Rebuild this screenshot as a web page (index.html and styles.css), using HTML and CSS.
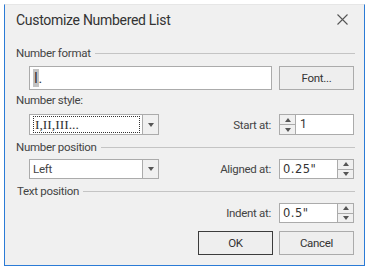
FILE: index.html
```html
<!DOCTYPE html>
<html lang="en">
<head>
    <meta charset="UTF-8">
    <title>Customize Numbered List</title>
    <link rel="stylesheet" href="styles.css">
</head>
<body>
    <div class="dialog">
        <div class="titlebar">
            <span class="title">Customize Numbered List</span>
            <svg class="close" width="11" height="11" viewBox="0 0 11 11">
                <path d="M0.5 0.5 L10.5 10.5 M10.5 0.5 L0.5 10.5" stroke="#555" stroke-width="1.1" fill="none"/>
            </svg>
        </div>

        <div class="group">
            <span>Number format</span>
            <div class="line"></div>
        </div>
        <div class="row row-format">
            <div class="textbox format"><span class="sel">I</span>.</div>
            <button class="btn">Font...</button>
        </div>

        <div class="label">Number style:</div>
        <div class="row row-style">
            <div class="combo">
                <div class="combo-text"><span class="focus">I,II,III...</span></div>
                <div class="combo-arrow"><i class="tri down"></i></div>
            </div>
            <span class="field-label">Start at:</span>
            <div class="spin spin-left">
                <div class="spin-btns">
                    <div class="spin-btn"><i class="tri up"></i></div>
                    <div class="spin-btn"><i class="tri down"></i></div>
                </div>
                <div class="spin-text">1</div>
            </div>
        </div>

        <div class="group">
            <span>Number position</span>
            <div class="line"></div>
        </div>
        <div class="row">
            <div class="combo">
                <div class="combo-text">Left</div>
                <div class="combo-arrow"><i class="tri down"></i></div>
            </div>
            <span class="field-label">Aligned at:</span>
            <div class="spin">
                <div class="spin-text">0.25"</div>
                <div class="spin-btns">
                    <div class="spin-btn"><i class="tri up"></i></div>
                    <div class="spin-btn"><i class="tri down"></i></div>
                </div>
            </div>
        </div>

        <div class="group group-text">
            <span>Text position</span>
            <div class="line"></div>
        </div>
        <div class="row">
            <span class="field-label">Indent at:</span>
            <div class="spin">
                <div class="spin-text">0.5"</div>
                <div class="spin-btns">
                    <div class="spin-btn"><i class="tri up"></i></div>
                    <div class="spin-btn"><i class="tri down"></i></div>
                </div>
            </div>
        </div>

        <div class="buttons">
            <button class="btn btn-default">OK</button>
            <button class="btn">Cancel</button>
        </div>
    </div>
</body>
</html>
```

FILE: styles.css
```css
* {
    margin: 0;
    padding: 0;
    box-sizing: border-box;
}

body {
    background: #ffffff;
    font-family: Roboto, 'Open Sans', sans-serif;
    font-size: 11.5px;
    letter-spacing: -0.3px;
    color: #444;
}

.dialog {
    margin: 4px 0 0 4px;
    width: 361px;
    height: 262px;
    background: #f0f0f0;
    border: 1px solid #2b7bd6;
    border-top-color: #e6e6e6;
}

.titlebar {
    height: 38px;
    display: flex;
    align-items: flex-start;
    justify-content: space-between;
    padding: 5px 16px 0 11px;
}

.title {
    font-size: 14px;
    line-height: 20px;
    color: #333;
}

.close {
    margin-top: 4px;
}

.group {
    display: flex;
    align-items: center;
    height: 20px;
    padding: 0 9px 0 11px;
}

.group span {
    white-space: nowrap;
    margin-right: 4px;
}

.group-text {
    margin-top: 2px;
    padding-left: 12px;
}

.line {
    flex: 1;
    height: 1px;
    background: #c4c4c4;
}

.label {
    height: 20px;
    line-height: 20px;
    padding-left: 11px;
}

.row {
    display: flex;
    align-items: center;
    height: 20px;
    margin: 2px 0;
    padding: 0 10px 0 24px;
}

.row-format {
    height: 24px;
    margin: 3px 0 0;
}

.row-style {
    height: 21px;
    margin-top: 4px;
}

.textbox {
    background: #fff;
    border: 1px solid #ababab;
    height: 100%;
}

.format {
    width: 243px;
    padding: 2px 0 2px 3px;
    display: flex;
    align-items: stretch;
    font-size: 14px;
    line-height: 18px;
    color: #333;
}

.sel {
    background: #c3c3c3;
    padding: 0 1px;
}

.btn {
    width: 75px;
    height: 23px;
    margin-left: auto;
    background: #eeeeee;
    border: 1px solid #ababab;
    font-family: inherit;
    font-size: 11.5px;
    letter-spacing: -0.3px;
    color: #333;
}

.row-format .btn {
    height: 24px;
}

.combo {
    display: flex;
    width: 130px;
    height: 100%;
    border: 1px solid #ababab;
    background: #fff;
}

.combo-text {
    flex: 1;
    padding: 1px 2px 1px 3px;
    line-height: 17px;
    display: flex;
}

.focus {
    flex: 1;
    border: 1px dotted #333;
    padding-left: 1px;
    line-height: 15px;
    font-family: 'Liberation Serif', serif;
    font-size: 13.5px;
    letter-spacing: 0;
    color: #333;
}

.combo-arrow {
    width: 16px;
    border-left: 1px solid #ababab;
    background: #f0f0f0;
    display: flex;
    align-items: center;
    justify-content: center;
}

.tri {
    width: 0;
    height: 0;
    border-left: 3px solid transparent;
    border-right: 3px solid transparent;
}

.tri.down {
    border-top: 4px solid #555;
}

.tri.up {
    border-bottom: 4px solid #555;
}

.field-label {
    margin-left: auto;
    margin-right: 8px;
    white-space: nowrap;
}

.spin {
    display: flex;
    width: 75px;
    height: 100%;
    border: 1px solid #ababab;
    background: #fff;
}

.spin-text {
    flex: 1;
    padding-left: 3px;
    line-height: 18px;
    font-family: 'DejaVu Sans', sans-serif;
    font-size: 11.5px;
    letter-spacing: 0.5px;
    color: #333;
}

.spin-left .spin-text {
    font-family: Roboto, sans-serif;
    font-size: 12px;
    padding-left: 4px;
}

.spin-btns {
    width: 16px;
    display: flex;
    flex-direction: column;
    background: #f0f0f0;
    border-left: 1px solid #ababab;
}

.spin-left .spin-btns {
    border-left: none;
    border-right: 1px solid #ababab;
}

.spin-btn {
    flex: 1;
    display: flex;
    align-items: center;
    justify-content: center;
}

.spin-btn + .spin-btn {
    border-top: 1px solid #ababab;
}

.buttons {
    display: flex;
    justify-content: flex-end;
    gap: 6px;
    margin-top: 8px;
    padding-right: 10px;
}

.buttons .btn {
    margin-left: 0;
    height: 24px;
}

.btn-default {
    border-color: #3c3c3c;
}
```
